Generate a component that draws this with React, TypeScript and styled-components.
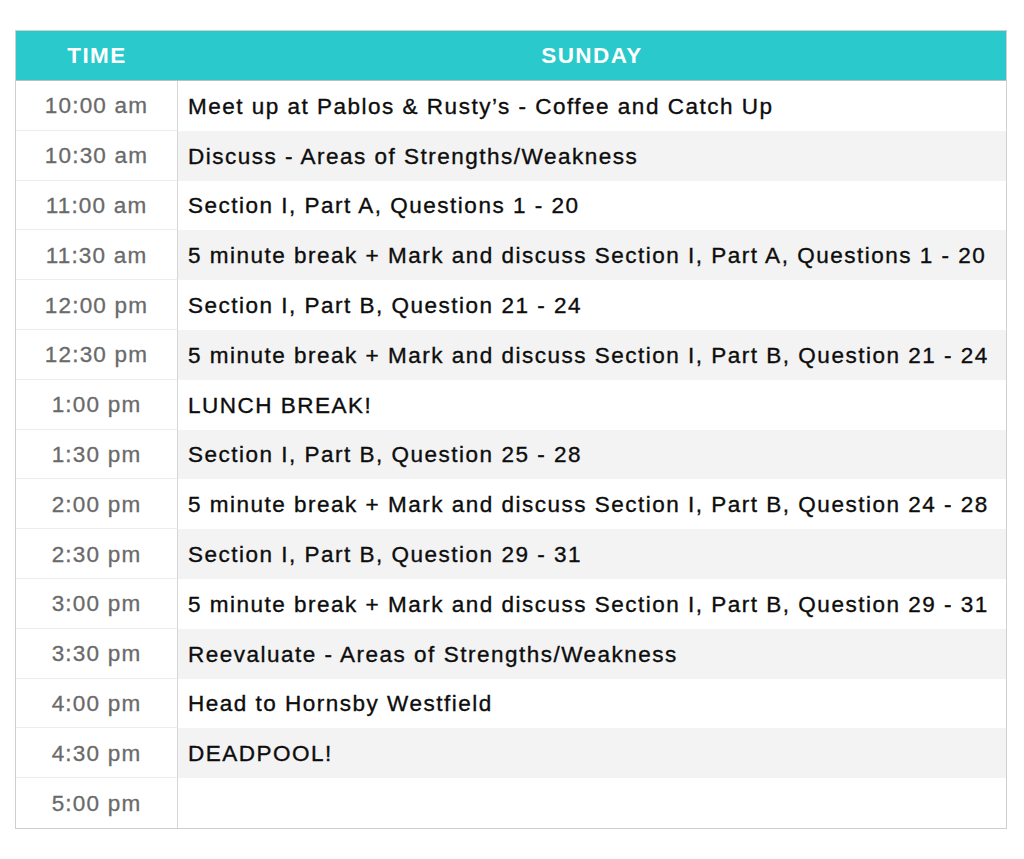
import styled, { createGlobalStyle } from 'styled-components';

const GlobalStyle = createGlobalStyle`
  body {
    margin: 0;
    background: #ffffff;
    font-family: 'Liberation Sans', Arial, sans-serif;
  }
`;

const Page = styled.div`
  padding: 30px 18px 0 15px;
`;

const Table = styled.div`
  width: 990px;
  border: 1px solid #cfcfcf;
  display: grid;
  grid-template-columns: 162px 1fr;
`;

const HeadCell = styled.div`
  height: 49px;
  background: #29c9cc;
  color: #ffffff;
  font-weight: 700;
  font-size: 22.5px;
  letter-spacing: 1.4px;
  display: flex;
  align-items: center;
  justify-content: center;
  border-bottom: 1px solid #bdbdbd;
`;

const TimeCell = styled.div<{ $last?: boolean }>`
  height: 49.8px;
  box-sizing: border-box;
  display: flex;
  align-items: center;
  justify-content: center;
  padding-top: 2px;
  color: #6a6a6a;
  font-size: 22.5px;
  letter-spacing: 1.2px;
  -webkit-text-stroke: 0.3px #6a6a6a;
  border-right: 1px solid #d6d6d6;
  border-bottom: ${(p) => (p.$last ? 'none' : '1px solid #ececec')};
`;

const EventCell = styled.div<{ $odd: boolean }>`
  height: 49.8px;
  box-sizing: border-box;
  display: flex;
  align-items: center;
  padding: 2px 0 0 10px;
  color: #0d0d0d;
  font-size: 22.5px;
  letter-spacing: 1.5px;
  -webkit-text-stroke: 0.35px #0d0d0d;
  white-space: nowrap;
  background: ${(p) => (p.$odd ? '#f3f3f3' : '#ffffff')};
`;

const schedule: [string, string][] = [
  ['10:00 am', 'Meet up at Pablos & Rusty\u2019s - Coffee and Catch Up'],
  ['10:30 am', 'Discuss - Areas of Strengths/Weakness'],
  ['11:00 am', 'Section I, Part A, Questions 1 - 20'],
  ['11:30 am', '5 minute break + Mark and discuss Section I, Part A, Questions 1 - 20'],
  ['12:00 pm', 'Section I, Part B, Question 21 - 24'],
  ['12:30 pm', '5 minute break + Mark and discuss Section I, Part B, Question 21 - 24'],
  ['1:00 pm', 'LUNCH BREAK!'],
  ['1:30 pm', 'Section I, Part B, Question 25 - 28'],
  ['2:00 pm', '5 minute break + Mark and discuss Section I, Part B, Question 24 - 28'],
  ['2:30 pm', 'Section I, Part B, Question 29 - 31'],
  ['3:00 pm', '5 minute break + Mark and discuss Section I, Part B, Question 29 - 31'],
  ['3:30 pm', 'Reevaluate - Areas of Strengths/Weakness'],
  ['4:00 pm', 'Head to Hornsby Westfield'],
  ['4:30 pm', 'DEADPOOL!'],
  ['5:00 pm', ''],
];

function App() {
  return (
    <Page>
      <GlobalStyle />
      <Table>
        <HeadCell>TIME</HeadCell>
        <HeadCell>SUNDAY</HeadCell>
        {schedule.map(([time, event], i) => (
          <>
            <TimeCell key={time} $last={i === schedule.length - 1}>
              {time}
            </TimeCell>
            <EventCell key={time + '-e'} $odd={i % 2 === 1}>
              {event}
            </EventCell>
          </>
        ))}
      </Table>
    </Page>
  );
}

export default App;
